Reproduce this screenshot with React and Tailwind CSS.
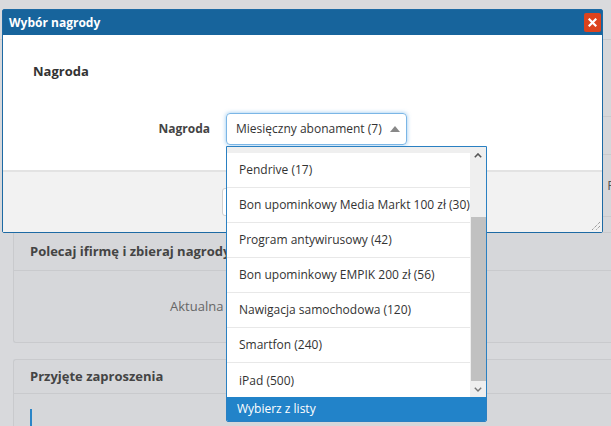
import React from "react";

const items = [
  "Pendrive (17)",
  "Bon upominkowy Media Markt 100 zł (30)",
  "Program antywirusowy (42)",
  "Bon upominkowy EMPIK 200 zł (56)",
  "Nawigacja samochodowa (120)",
  "Smartfon (240)",
  "iPad (500)",
];

export default function App() {
  return (
    <div
      className="relative w-[611px] h-[426px] overflow-hidden bg-[#d8d9dc] text-[#333]"
      style={{ fontFamily: '"Open Sans", "Liberation Sans", sans-serif' }}
    >
      {/* Background page (under overlay) */}
      <div className="flex flex-col">
        <div className="h-[40px] border-b border-[#c9cacd] bg-[#d9dadd]" />
        <div className="ml-[13px] h-[192px] border-l border-[#c9cacd] bg-[#d6d7da] flex flex-col">
          <div className="h-[77px] border-b border-[#c9cacd]" />
          <div className="h-[38px] border-b border-[#c9cacd]" />
          <div className="h-[62px] border-b border-[#c9cacd] flex items-center justify-end">
            <span className="text-[13px] text-[#555] translate-x-[4px]">P</span>
          </div>
        </div>
        <div className="ml-[13px] h-[111px] border border-r-0 border-[#c9cacd] rounded-bl-[3px] bg-[#d6d7da] flex flex-col">
          <div className="h-[38px] border-b border-[#c9cacd] flex items-center pl-[16px]">
            <span className="text-[13px] font-bold text-[#444] whitespace-nowrap">
              Polecaj ifirmę i zbieraj nagrody
            </span>
          </div>
          <div className="flex-1 flex items-center pl-[156px]">
            <span className="text-[13px] text-[#666] whitespace-nowrap">Aktualna l</span>
          </div>
        </div>
        <div className="ml-[13px] mt-[16px] h-[80px] border border-r-0 border-b-0 border-[#c9cacd] rounded-tl-[3px] bg-[#d6d7da] flex flex-col">
          <div className="h-[40px] border-b border-[#c9cacd] flex items-center pl-[16px]">
            <span className="text-[13px] font-bold text-[#444] whitespace-nowrap">Przyjęte zaproszenia</span>
          </div>
          <div className="pl-[16px] pt-[15px]">
            <div className="w-[2px] h-[30px] bg-[#2b85c7]" />
          </div>
        </div>
      </div>

      {/* Dialog */}
      <div className="absolute left-[2px] top-[9px] w-[601px] h-[224px] border border-[#1d6aa4] rounded-[2px] bg-white flex flex-col">
        <div className="h-[25px] bg-[#17649c] flex items-center justify-between pl-[6px] pr-[1px]">
          <span className="text-white text-[12px] font-bold">Wybór nagrody</span>
          <div className="w-[17px] h-[19px] bg-[#dc431d] rounded-[2px] flex items-center justify-center">
            <svg width="9" height="9" viewBox="0 0 9 9">
              <path d="M1.5 1.5 L7.5 7.5 M7.5 1.5 L1.5 7.5" stroke="white" strokeWidth="2.2" strokeLinecap="square" />
            </svg>
          </div>
        </div>
        <div className="h-[135px] bg-white flex flex-col">
          <div className="pl-[30px] pt-[27px] text-[13px] font-bold text-[#333]">Nagroda</div>
          <div className="flex items-center mt-[31px]">
            <div className="w-[207px] text-right text-[12px] font-bold text-[#444]">Nagroda</div>
            <div className="ml-[16px] w-[181px] h-[32px] border border-[#7bb6e6] rounded-[4px] shadow-[0_0_4px_rgba(102,175,233,0.7)] flex items-center justify-between pl-[9px] pr-[6px]">
              <span className="text-[12px] text-[#333] whitespace-nowrap">Miesięczny abonament (7)</span>
              <svg width="10" height="6" viewBox="0 0 10 6">
                <path d="M0 6 L5 0 L10 6 Z" fill="#888" />
              </svg>
            </div>
          </div>
        </div>
        <div className="flex-1 bg-[#f2f2f2] border-t-2 border-[#e3e3e3] relative flex items-center pl-[219px]">
          <div className="w-[90px] h-[28px] border border-[#cfcfcf] rounded-[3px] bg-white" />
          <svg className="absolute right-[1px] bottom-[1px]" width="12" height="12" viewBox="0 0 12 12">
            <path d="M11 3 L3 11 M11 7 L7 11" stroke="#777" strokeWidth="1" strokeDasharray="1 1" />
          </svg>
        </div>
      </div>

      {/* Dropdown */}
      <div className="absolute left-[226px] top-[146px] w-[261px] h-[276px] border border-[#2a80c2] rounded-b-[2px] bg-white flex flex-col overflow-hidden">
        <div className="h-[250px] flex">
          <div className="flex-1 flex flex-col overflow-hidden">
            <div className="h-[6px] shrink-0 bg-[#efefef]" />
            {items.map((t, i) => (
              <div
                key={t}
                className={`h-[35px] shrink-0 flex items-center pl-[12px] text-[12px] text-[#333] whitespace-nowrap ${i < items.length - 1 ? "border-b border-[#e8e8e8]" : ""}`}
              >
                {t}
              </div>
            ))}
          </div>
          <div className="w-[16px] bg-[#efefef] flex flex-col items-center">
            <div className="h-[17px] flex items-center justify-center">
              <svg width="8" height="5" viewBox="0 0 8 5">
                <path d="M0.8 4.2 L4 1 L7.2 4.2" stroke="#555" strokeWidth="1.6" fill="none" />
              </svg>
            </div>
            <div className="mt-[53px] w-[15px] h-[164px] bg-[#c1c1c1]" />
            <div className="flex-1 flex items-center justify-center">
              <svg width="8" height="5" viewBox="0 0 8 5">
                <path d="M0.8 0.8 L4 4 L7.2 0.8" stroke="#777" strokeWidth="1.4" fill="none" />
              </svg>
            </div>
          </div>
        </div>
        <div className="flex-1 bg-[#2283c9] flex items-center pl-[10px]">
          <span className="text-white text-[12px]">Wybierz z listy</span>
        </div>
      </div>
    </div>
  );
}
